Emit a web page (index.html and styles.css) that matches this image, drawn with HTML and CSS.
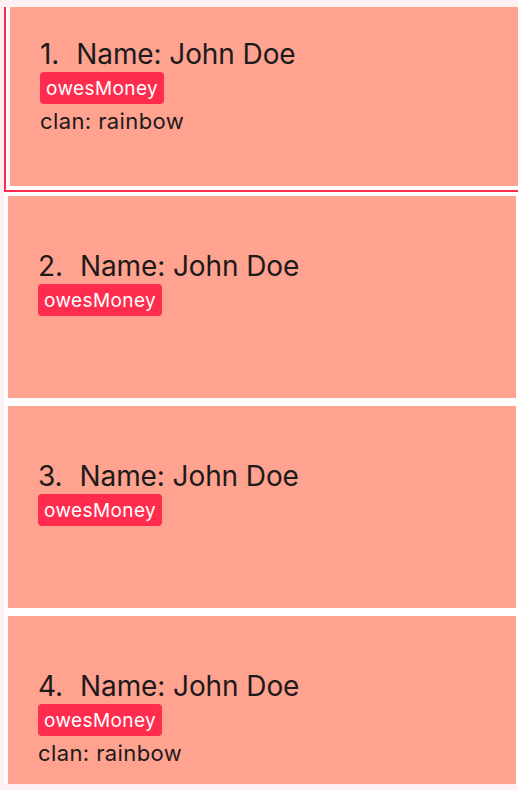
FILE: index.html
```html
<!DOCTYPE html>
<html>
<head>
<meta charset="utf-8">
<link rel="stylesheet" href="styles.css">
</head>
<body>
<div class="list">
  <div class="list-inner">
    <div class="cell selected">
      <div class="card">
        <div class="title"><span class="idx">1.</span><span class="name">Name: John Doe</span></div>
        <div class="tags"><span class="tag">owesMoney</span></div>
        <div class="clan">clan: rainbow</div>
      </div>
    </div>
    <div class="cell">
      <div class="card">
        <div class="title"><span class="idx">2.</span><span class="name">Name: John Doe</span></div>
        <div class="tags"><span class="tag">owesMoney</span></div>
      </div>
    </div>
    <div class="cell">
      <div class="card">
        <div class="title"><span class="idx">3.</span><span class="name">Name: John Doe</span></div>
        <div class="tags"><span class="tag">owesMoney</span></div>
      </div>
    </div>
    <div class="cell">
      <div class="card">
        <div class="title"><span class="idx">4.</span><span class="name">Name: John Doe</span></div>
        <div class="tags"><span class="tag">owesMoney</span></div>
        <div class="clan">clan: rainbow</div>
      </div>
    </div>
  </div>
</div>
</body>
</html>
```

FILE: styles.css
```css
html, body {
  margin: 0;
  padding: 0;
  background: #fff0f3;
  font-family: Inter, "Noto Sans", sans-serif;
  color: #1c1a1a;
}

.list {
  margin: 7px 0 0 4px;
  height: 777px;
  overflow: hidden;
  background: #ffffff;
}

.list-inner {
  margin-top: -29px;
  display: flex;
  flex-direction: column;
}

.cell {
  padding: 4px 2px 4px 4px;
  width: 508px;
}

.cell.selected {
  border: 2px solid #ff2a4d;
  width: 508px;
}

.card {
  height: 202px;
  box-sizing: border-box;
  background: #ffa28f;
  padding: 53px 0 0 30px;
  display: flex;
  flex-direction: column;
  align-items: flex-start;
}

.title {
  font-size: 28px;
  line-height: 34px;
  display: flex;
  gap: 17px;
  letter-spacing: -0.1px;
}

.tags {
  margin-top: 1px;
  display: flex;
}

.tag {
  background: #ff2c4e;
  color: #ffffff;
  font-size: 19px;
  line-height: 23px;
  letter-spacing: 0.4px;
  padding: 5px 6px 4px 6px;
  border-radius: 4px;
}

.clan {
  margin-top: 4px;
  font-size: 22px;
  line-height: 26px;
  letter-spacing: 0.4px;
}
```
